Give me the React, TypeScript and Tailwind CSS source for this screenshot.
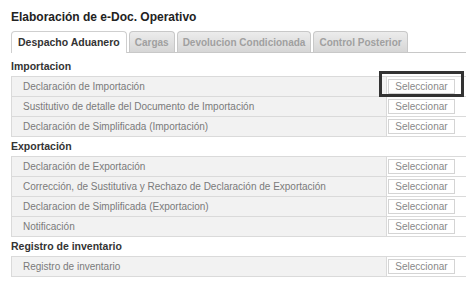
import React from 'react'

const sections = [
  {
    title: 'Importacion',
    rows: [
      'Declaración de Importación',
      'Sustitutivo de detalle del Documento de Importación',
      'Declaración de Simplificada (Importación)',
    ],
  },
  {
    title: 'Exportación',
    rows: [
      'Declaración de Exportación',
      'Corrección, de Sustitutiva y Rechazo de Declaración de Exportación',
      'Declaracion de Simplificada (Exportacion)',
      'Notificación',
    ],
  },
  {
    title: 'Registro de inventario',
    rows: ['Registro de inventario'],
  },
]

const tabs = ['Despacho Aduanero', 'Cargas', 'Devolucion Condicionada', 'Control Posterior']

function SelectButton() {
  return (
    <button className="w-[67px] h-[15px] border border-[#d4d4d4] bg-white text-[10px] text-[#888] leading-none">
      Seleccionar
    </button>
  )
}

export default function App() {
  return (
    <div
      className="w-[473px] h-[281px] bg-white pl-[11px] pr-[7px] pt-[9px] overflow-hidden"
      style={{ fontFamily: '"Liberation Sans", Arial, sans-serif' }}
    >
      <h1 className="text-[12px] leading-[16px] font-bold text-[#222] h-[22px]">
        Elaboración de e-Doc. Operativo
      </h1>

      <div className="flex items-end gap-[2px] border-b border-[#c8c8c8] h-[22px] w-[455px]">
        {tabs.map((t, i) =>
          i === 0 ? (
            <div
              key={t}
              className="h-[22px] -mb-px px-[6px] flex items-center bg-white border border-b-0 border-[#cfcfcf] rounded-t-[4px] text-[10.5px] font-bold text-[#333]"
            >
              {t}
            </div>
          ) : (
            <div
              key={t}
              className="h-[21px] px-[5px] flex items-center bg-gradient-to-b from-[#ececec] to-[#d6d6d6] border border-b-0 border-[#c8c8c8] rounded-t-[4px] text-[10px] font-bold text-[#a0a0a0]"
            >
              {t}
            </div>
          )
        )}
      </div>

      <div className="pt-[4px]">
        {sections.map((s) => (
          <div key={s.title}>
            <div className="h-[19px] flex items-center text-[10.5px] font-bold text-[#333]">{s.title}</div>
            <div className="w-[455px] border-t border-[#dadada]">
              {s.rows.map((r, i) => (
                <div key={r} className="flex h-[20px] border-b border-[#dadada]">
                  <div className="w-[376px] bg-[#f2f2f2] border-l border-r border-[#dadada] pl-[11px] flex items-center text-[10px] text-[#7a7a7a]">
                    {r}
                  </div>
                  <div className="flex-1 flex items-center pl-[1px]">
                    {s.title === 'Importacion' && i === 0 ? (
                      <div className="relative flex">
                        <div className="absolute -left-[9px] -top-[8px] w-[85px] h-[26px] border-[3px] border-[#333]" />
                        <SelectButton />
                      </div>
                    ) : (
                      <SelectButton />
                    )}
                  </div>
                </div>
              ))}
            </div>
          </div>
        ))}
      </div>
    </div>
  )
}
